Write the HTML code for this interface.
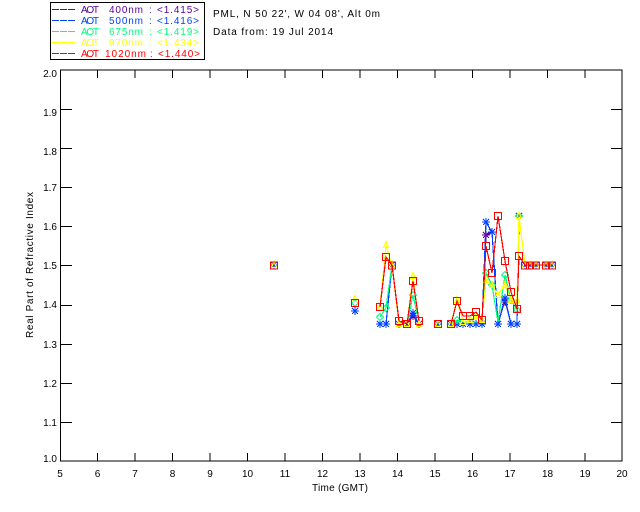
<!DOCTYPE html>
<html><head><meta charset="utf-8"><style>
html,body{margin:0;padding:0;background:#fff}
svg{display:block}
text{font-family:"Liberation Sans",sans-serif;font-size:10px;fill:#000}
.c{text-anchor:middle}.r{text-anchor:end}
.l{fill:none;stroke-width:1.2}
</style></head><body>
<svg width="640" height="512" viewBox="0 0 640 512">
<defs>
<g id="st" fill="none" stroke-width="1.2"><path d="M-4 0H4M0 -4V4M-3 -3L3 3M-3 3L3 -3"/></g>
<path id="di" fill="none" stroke-width="1" d="M0 -3.5L3.5 0L0 3.5L-3.5 0Z"/>
<path id="tr" fill="none" stroke-width="1.2" d="M0 -3.5L2.5 2.5L-2.5 2.5Z"/>
<rect id="sq" x="-3.5" y="-3.5" width="7" height="7" fill="none" stroke-width="1.3"/>
</defs>
<g shape-rendering="crispEdges">
<rect x="50.5" y="2.5" width="154" height="57" fill="#fff" stroke="#000"/>
<path d="M52 9.5H75" stroke="#5a00a0" stroke-dasharray="7 1"/><path d="M52 20.5H75" stroke="#0040ff" stroke-dasharray="7 1"/><path d="M52 31.5H75" stroke="#00ff80" stroke-dasharray="7 1"/><path d="M52 42.5H75" stroke="#ffff00" stroke-dasharray="7 1"/><path d="M52 53.5H75" stroke="#ff0000" stroke-dasharray="7 1"/>
<rect x="60.5" y="70" width="561.5" height="391" fill="none" stroke="#000" stroke-width="1"/>
<path stroke="#000" fill="none" d="M97.5 461V453M135 461V453M172.5 461V453M210 461V453M247.5 461V453M285 461V453M322.5 461V453M360 461V453M397.5 461V453M435 461V453M472.5 461V453M510 461V453M547.5 461V453M585 461V453
M97.5 70V78M135 70V78M172.5 70V78M210 70V78M247.5 70V78M285 70V78M322.5 70V78M360 70V78M397.5 70V78M435 70V78M472.5 70V78M510 70V78M547.5 70V78M585 70V78
M61 422.5H72M61 383.5H72M61 344.5H72M61 305.5H72M61 265.5H72M61 226.5H72M61 187.5H72M61 148.5H72M61 109.5H72
M622 422.5H611M622 383.5H611M622 344.5H611M622 305.5H611M622 265.5H611M622 226.5H611M622 187.5H611M622 148.5H611M622 109.5H611"/>
<g stroke="#5a00a0">
<polyline class="l" points="380,324 386,324 392,265 399,324 407,324 413,316 419,324"/>
<polyline class="l" points="451,324 457,324 463,324 470,324 476,324 482,324 486,235 492,232 498,324 505,300 511,324 517,324 519,216 525,265 530,265 536,265 546,265 552,265"/>
<use href="#st" x="486" y="235"/><use href="#st" x="413" y="316"/><use href="#st" x="505" y="302"/>
</g>
<g stroke="#0040ff">
<polyline class="l" points="380,324 386,324 392,265 399,324 407,324 413,313 419,324"/>
<polyline class="l" points="451,324 457,324 463,324 470,324 476,324 482,324 486,222 492,232 498,324 505,298 511,324 517,324 519,216 525,265 530,265 536,265 546,265 552,265"/>
<use href="#st" x="274" y="265"/><use href="#st" x="355" y="311"/><use href="#st" x="380" y="324"/><use href="#st" x="386" y="324"/><use href="#st" x="392" y="265"/><use href="#st" x="399" y="324"/><use href="#st" x="407" y="324"/><use href="#st" x="413" y="313"/><use href="#st" x="419" y="324"/><use href="#st" x="438" y="324"/><use href="#st" x="451" y="324"/><use href="#st" x="457" y="324"/><use href="#st" x="463" y="324"/><use href="#st" x="470" y="324"/><use href="#st" x="476" y="324"/><use href="#st" x="482" y="324"/><use href="#st" x="486" y="222"/><use href="#st" x="492" y="232"/><use href="#st" x="498" y="324"/><use href="#st" x="505" y="298"/><use href="#st" x="511" y="324"/><use href="#st" x="517" y="324"/><use href="#st" x="519" y="216"/><use href="#st" x="525" y="265"/><use href="#st" x="530" y="265"/><use href="#st" x="536" y="265"/><use href="#st" x="546" y="265"/><use href="#st" x="552" y="265"/>
</g>
<g stroke="#00ff80">
<polyline class="l" points="380,317 386,308 392,265 399,322 407,324 413,295 419,322"/>
<polyline class="l" points="451,324 457,320 463,322 470,322 476,322 482,322 486,273 492,285 498,322 505,275 511,300 517,310 519,216 525,265 530,265 536,265 546,265 552,265"/>
<use href="#di" x="355" y="303"/><use href="#di" x="380" y="317"/><use href="#di" x="386" y="308"/><use href="#di" x="413" y="295"/><use href="#di" x="457" y="320"/><use href="#di" x="486" y="273"/><use href="#di" x="492" y="285"/><use href="#di" x="505" y="275"/><use href="#di" x="511" y="300"/><use href="#di" x="517" y="310"/><use href="#di" x="519" y="216"/>
</g>
<g stroke="#ffff00">
<polyline class="l" points="380,307 386,245 392,265 399,324 407,324 413,276 419,324"/>
<polyline class="l" points="451,324 457,300 463,322 470,320 476,316 482,320 486,280 492,285 498,295 505,285 511,300 517,300 519,216 525,265 530,265 536,265 546,265 552,265"/>
<use href="#tr" x="274" y="265"/><use href="#tr" x="355" y="299"/><use href="#tr" x="380" y="307"/><use href="#tr" x="386" y="245"/><use href="#tr" x="392" y="265"/><use href="#tr" x="399" y="324"/><use href="#tr" x="407" y="324"/><use href="#tr" x="413" y="276"/><use href="#tr" x="419" y="324"/><use href="#tr" x="438" y="324"/><use href="#tr" x="451" y="324"/><use href="#tr" x="457" y="300"/><use href="#tr" x="463" y="322"/><use href="#tr" x="470" y="320"/><use href="#tr" x="476" y="316"/><use href="#tr" x="482" y="320"/><use href="#tr" x="486" y="280"/><use href="#tr" x="492" y="285"/><use href="#tr" x="498" y="295"/><use href="#tr" x="505" y="285"/><use href="#tr" x="511" y="300"/><use href="#tr" x="517" y="300"/><use href="#tr" x="519" y="216"/><use href="#tr" x="525" y="265"/><use href="#tr" x="530" y="265"/><use href="#tr" x="536" y="265"/><use href="#tr" x="546" y="265"/><use href="#tr" x="552" y="265"/>
</g>
<g stroke="#ff0000">
<polyline class="l" points="380,307 386,257 392,265 399,321 407,324 413,281 419,321"/>
<polyline class="l" points="451,324 457,301 463,316 470,316 476,312 482,320 486,246 492,273 498,216 505,261 511,292 517,309 519,256 525,265 530,265 536,265 546,265 552,265"/>
<use href="#sq" x="274" y="265.5"/><use href="#sq" x="355" y="303"/><use href="#sq" x="380" y="307"/><use href="#sq" x="386" y="257"/><use href="#sq" x="392" y="265.5"/><use href="#sq" x="399" y="321"/><use href="#sq" x="407" y="324"/><use href="#sq" x="413" y="281"/><use href="#sq" x="419" y="321"/><use href="#sq" x="438" y="324"/><use href="#sq" x="451" y="324"/><use href="#sq" x="457" y="301"/><use href="#sq" x="463" y="316"/><use href="#sq" x="470" y="316"/><use href="#sq" x="476" y="312"/><use href="#sq" x="482" y="320"/><use href="#sq" x="486" y="246"/><use href="#sq" x="492" y="273"/><use href="#sq" x="498" y="216"/><use href="#sq" x="505" y="261"/><use href="#sq" x="511" y="292"/><use href="#sq" x="517" y="309"/><use href="#sq" x="519" y="256"/><use href="#sq" x="525" y="265.5"/><use href="#sq" x="530" y="265.5"/><use href="#sq" x="536" y="265.5"/><use href="#sq" x="546" y="265.5"/><use href="#sq" x="552" y="265.5"/>
</g>
</g>
<g>
<text x="81" y="13" textLength="18" style="fill:#5a00a0">AOT</text><text x="109" y="13" textLength="34" style="fill:#5a00a0">400nm</text><text x="149" y="13" style="fill:#5a00a0">:</text><text x="157" y="13" textLength="42" style="fill:#5a00a0">&lt;1.415&gt;</text>
<text x="81" y="24" textLength="18" style="fill:#0040ff">AOT</text><text x="109" y="24" textLength="34" style="fill:#0040ff">500nm</text><text x="149" y="24" style="fill:#0040ff">:</text><text x="157" y="24" textLength="42" style="fill:#0040ff">&lt;1.416&gt;</text>
<text x="81" y="35" textLength="18" style="fill:#00ff80">AOT</text><text x="109" y="35" textLength="34" style="fill:#00ff80">675nm</text><text x="149" y="35" style="fill:#00ff80">:</text><text x="157" y="35" textLength="42" style="fill:#00ff80">&lt;1.419&gt;</text>
<text x="81" y="46" textLength="18" style="fill:#ffff00">AOT</text><text x="109" y="46" textLength="34" style="fill:#ffff00">870nm</text><text x="149" y="46" style="fill:#ffff00">:</text><text x="157" y="46" textLength="42" style="fill:#ffff00">&lt;1.434&gt;</text>
<text x="81" y="57" textLength="18" style="fill:#ff0000">AOT</text><text x="105" y="57" textLength="41" style="fill:#ff0000">1020nm</text><text x="150" y="57" style="fill:#ff0000">:</text><text x="158" y="57" textLength="42" style="fill:#ff0000">&lt;1.440&gt;</text>
<text x="213" y="17" textLength="167">PML, N 50 22', W 04 08', Alt 0m</text>
<text x="213" y="35" textLength="120">Data from: 19 Jul 2014</text>
<text class="r" x="57" y="77">2.0</text><text class="r" x="57" y="116">1.9</text><text class="r" x="57" y="155">1.8</text><text class="r" x="57" y="191">1.7</text><text class="r" x="57" y="230">1.6</text><text class="r" x="57" y="269">1.5</text><text class="r" x="57" y="308">1.4</text><text class="r" x="57" y="348">1.3</text><text class="r" x="57" y="387">1.2</text><text class="r" x="57" y="426">1.1</text><text class="r" x="57" y="462">1.0</text>
<text class="c" x="60" y="477">5</text><text class="c" x="97.5" y="477">6</text><text class="c" x="135" y="477">7</text><text class="c" x="172.5" y="477">8</text><text class="c" x="210" y="477">9</text><text class="c" x="247.5" y="477">10</text><text class="c" x="285" y="477">11</text><text class="c" x="322.5" y="477">12</text><text class="c" x="360" y="477">13</text><text class="c" x="397.5" y="477">14</text><text class="c" x="435" y="477">15</text><text class="c" x="472.5" y="477">16</text><text class="c" x="510" y="477">17</text><text class="c" x="547.5" y="477">18</text><text class="c" x="585" y="477">19</text><text class="c" x="622" y="477">20</text>
<text x="312" y="491" textLength="56">Time (GMT)</text>
<text transform="translate(33,338) rotate(-90)" textLength="146">Real Part of Refractive Index</text>
</g>
</svg>
</body></html>
